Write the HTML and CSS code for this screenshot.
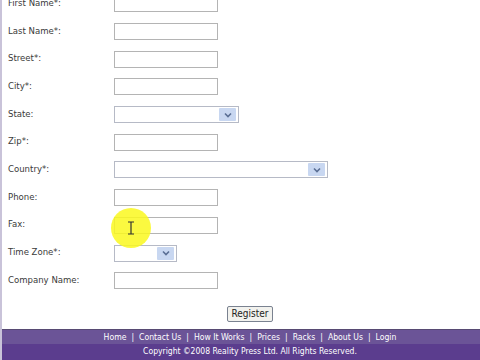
FILE: index.html
```html
<!DOCTYPE html>
<html>
<head>
    <meta charset="UTF-8">
    <title>Register</title>
    <link rel="stylesheet" href="styles.css">
</head>
<body>
<div id="page">
    <div class="form">
        <div class="row"><label>First Name*:</label><input type="text"></div>
        <div class="row"><label>Last Name*:</label><input type="text"></div>
        <div class="row"><label>Street*:</label><input type="text"></div>
        <div class="row"><label>City*:</label><input type="text"></div>
        <div class="row"><label>State:</label>
            <div class="sel state"><span class="arrow"><svg width="8" height="6" viewBox="0 0 8 6"><path d="M1 1.5 L4 4.5 L7 1.5" fill="none" stroke="#4d6185" stroke-width="1.6"/></svg></span></div>
        </div>
        <div class="row"><label>Zip*:</label><input type="text"></div>
        <div class="row"><label>Country*:</label>
            <div class="sel country"><span class="arrow"><svg width="8" height="6" viewBox="0 0 8 6"><path d="M1 1.5 L4 4.5 L7 1.5" fill="none" stroke="#4d6185" stroke-width="1.6"/></svg></span></div>
        </div>
        <div class="row"><label>Phone:</label><input type="text"></div>
        <div class="row"><label>Fax:</label><input type="text"></div>
        <div class="row"><label>Time Zone*:</label>
            <div class="sel zone"><span class="arrow"><svg width="8" height="6" viewBox="0 0 8 6"><path d="M1 1.5 L4 4.5 L7 1.5" fill="none" stroke="#4d6185" stroke-width="1.6"/></svg></span></div>
        </div>
        <div class="row"><label>Company Name:</label><input type="text"></div>
        <div class="submit"><button type="button">Register</button></div>
    </div>
    <div class="footer">
        <div class="nav">
            <a>Home</a><span>|</span><a>Contact Us</a><span>|</span><a>How It Works</a><span>|</span><a>Prices</a><span>|</span><a>Racks</a><span>|</span><a>About Us</a><span>|</span><a>Login</a>
        </div>
        <div class="copy">Copyright &copy;2008 Reality Press Ltd. All Rights Reserved.</div>
    </div>
</div>
<!-- cursor highlight from the screen recording -->
<div class="spot">
    <svg width="8" height="14" viewBox="0 0 8 14"><path d="M1 1 H7 M4 1 V13 M1 13 H7" fill="none" stroke="#333" stroke-width="1.2"/></svg>
</div>
</body>
</html>
```

FILE: styles.css
```css
* {
    margin: 0;
    padding: 0;
    box-sizing: border-box;
}
html, body {
    height: 100%;
    overflow: hidden;
}
body {
    background: #fff;
    font-family: "DejaVu Sans Condensed", "DejaVu Sans", sans-serif;
    font-size: 9.5px;
    color: #3a3a3a;
}
#page {
    display: flex;
    flex-direction: column;
    height: 360px;
    border-left: 2px solid #c9c3d9;
}
.form {
    flex: 1;
    margin-top: -10px;
}
.row {
    display: flex;
    align-items: center;
    height: 27.7px;
}
.row label {
    width: 112px;
    padding-left: 6px;
    margin-top: -3px;
}
.row input {
    width: 104px;
    height: 17px;
    border: 1px solid #b4b4b4;
    background: #fff;
}
.sel {
    display: flex;
    justify-content: flex-end;
    align-items: center;
    height: 17px;
    padding-right: 2px;
    border: 1px solid #b6bac6;
    background: #fff;
}
.sel.state {
    width: 125px;
}
.sel.country {
    width: 214px;
}
.sel.zone {
    width: 63px;
}
.arrow {
    display: flex;
    justify-content: center;
    align-items: center;
    width: 17px;
    height: 13px;
    background: #c8d7f1;
    border-radius: 1px;
}
.arrow path {
    stroke: #5a6e94;
}
.submit {
    display: flex;
    justify-content: center;
    padding-left: 18px;
    margin-top: 11px;
}
.submit button {
    width: 46px;
    height: 16px;
    font-family: "DejaVu Sans Condensed", "DejaVu Sans", sans-serif;
    font-size: 10px;
    color: #222;
    background: #f2f2ee;
    border: 1px solid #7a8290;
    border-radius: 2px;
}
.footer {
    border-top: 1px solid #574a73;
    color: #fff;
    text-align: center;
    padding-left: 18px;
    background: #5b3d8e;
}
.nav {
    height: 14px;
    line-height: 14px;
    background: #6b5497;
    margin-left: -18px;
    padding-left: 18px;
    font-size: 8.6px;
}
.nav span {
    margin: 0 5px;
}
.copy {
    height: 16px;
    line-height: 14px;
    font-size: 8.5px;
}
.spot {
    position: absolute;
    left: 111px;
    top: 208px;
    width: 40px;
    height: 40px;
    border-radius: 50%;
    background: rgba(250, 248, 30, 0.85);
    display: flex;
    justify-content: center;
    align-items: center;
}
```
